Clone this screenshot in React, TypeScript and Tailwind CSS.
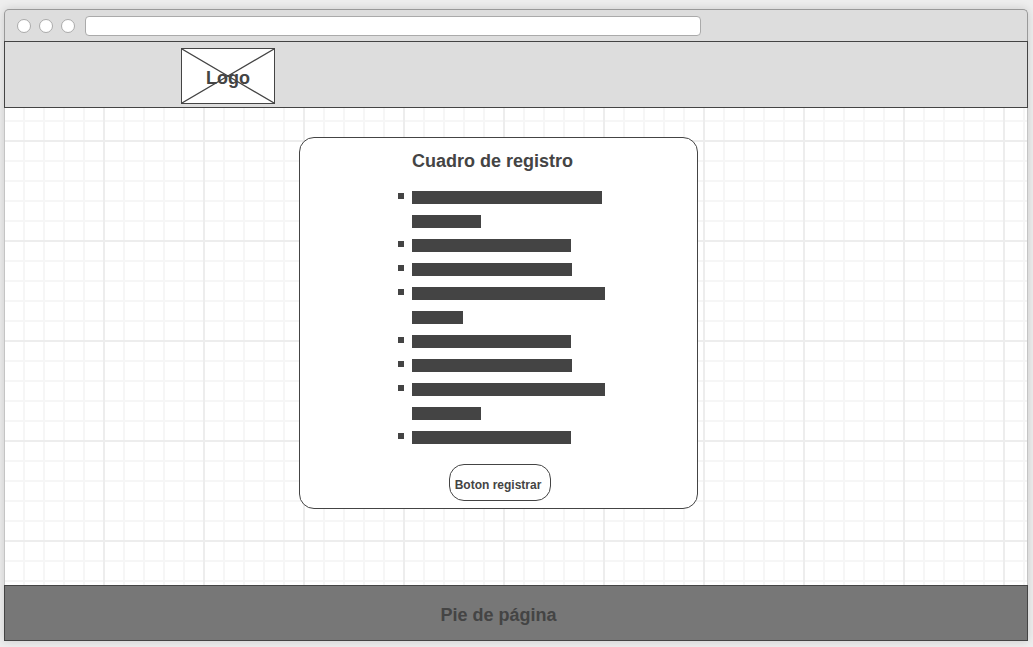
const items: string[][] = [
  ['w-[190px]', 'w-[69px]'],
  ['w-[159px]'],
  ['w-[160px]'],
  ['w-[193px]', 'w-[51px]'],
  ['w-[159px]'],
  ['w-[160px]'],
  ['w-[193px]', 'w-[69px]'],
  ['w-[159px]'],
];

function TitleBar() {
  return (
    <div className="flex h-8 items-center rounded-t-[5px] border border-b-0 border-[#999] bg-[#ddd] pl-3 pt-px">
      <div className="flex shrink-0 gap-2">
        {[0, 1, 2].map((i) => (
          <span key={i} className="size-3.5 rounded-full border border-[#aaa] bg-white" />
        ))}
      </div>
      <input
        type="text"
        aria-label="URL"
        className="ml-2.5 h-5 w-[61%] rounded border border-[#aaa] bg-white px-2 text-xs outline-none"
      />
    </div>
  );
}

function Logo() {
  return (
    <div className="grid h-14 w-[94px] border border-[#444] bg-white">
      <svg
        className="col-start-1 row-start-1 h-full w-full"
        viewBox="0 0 92 54"
        preserveAspectRatio="none"
        stroke="#444"
        strokeWidth="1.2"
        aria-hidden="true"
      >
        <path d="M0 0L92 54M92 0L0 54" />
      </svg>
      <span className="col-start-1 row-start-1 self-center justify-self-center pt-1 text-lg leading-6 font-bold">
        Logo
      </span>
    </div>
  );
}

function RegisterCard() {
  return (
    <section className="flex w-[399px] flex-col rounded-[15px] border border-[#444] bg-white pb-[7px]">
      <h1 className="mt-[11px] ml-28 text-lg leading-6 font-bold">Cuadro de registro</h1>
      <ul className="mt-3 ml-[98px]">
        {items.map((lines, i) => (
          <li key={i} className="flex gap-2">
            <span className="mt-2 size-1.5 bg-[#444]" />
            <div>
              {lines.map((width, j) => (
                <div key={j} className="flex h-6 items-center">
                  <span className={`h-[13px] bg-[#444] ${width}`} />
                </div>
              ))}
            </div>
          </li>
        ))}
      </ul>
      <button
        type="button"
        className="mt-[15px] ml-[149px] h-[37px] w-[102px] rounded-[15px] border border-[#444] bg-white pt-1 pr-1 text-xs font-bold whitespace-nowrap"
      >
        Boton registrar
      </button>
    </section>
  );
}

export default function App() {
  return (
    <div className="flex min-h-screen flex-col bg-[#eee] pt-[9px] pr-[5px] pb-1.5 pl-1 font-['Liberation_Sans',Arial,sans-serif] text-[#444]">
      <div className="flex flex-1 flex-col rounded-t-[5px] shadow-[0_0_10px_rgba(0,0,0,0.15)]">
        <TitleBar />
        <header className="border border-[#444] bg-[#ddd] pt-1.5 pb-[3px] pl-44">
          <Logo />
        </header>
        <main className="flex flex-1 items-start justify-center border-x border-[#c4c4c4] bg-white bg-[linear-gradient(to_right,transparent_98px,#ededed_98px),linear-gradient(to_bottom,transparent_98px,#ededed_98px),linear-gradient(to_right,transparent_18px,#f6f6f6_18px),linear-gradient(to_bottom,transparent_18px,#f6f6f6_18px)] bg-[size:100px_100px,100px_100px,20px_20px,20px_20px] bg-[position:0_0,0_34px,0_0,0_14px] pt-[29px] pr-[35px] pb-6">
          <RegisterCard />
        </main>
        <footer className="flex h-14 items-center justify-center border border-[#444] bg-[#777] pt-1 pr-[35px]">
          <p className="text-lg leading-6 font-bold">Pie de página</p>
        </footer>
      </div>
    </div>
  );
}
